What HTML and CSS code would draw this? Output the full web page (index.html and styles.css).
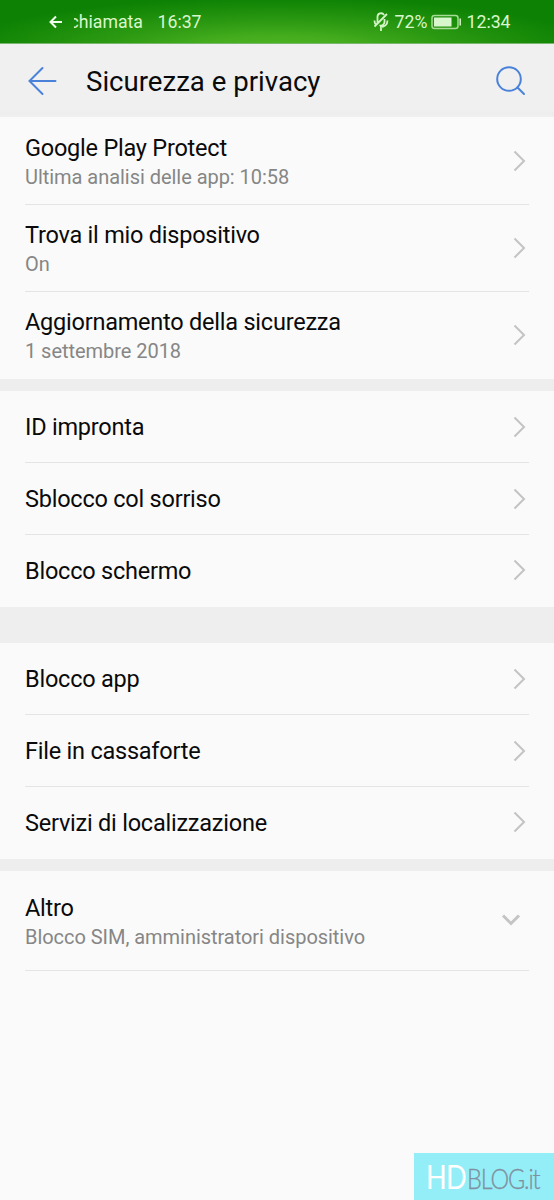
FILE: index.html
```html
<!DOCTYPE html>
<html lang="it">
<head>
<meta charset="utf-8">
<title>Sicurezza e privacy</title>
<link rel="stylesheet" href="styles.css">
</head>
<body>
<div class="status">
  <svg class="status-back" width="14" height="14" viewBox="0 0 14 14"><path d="M13 7H1.500M7 1.500L1.500 7L7 12.500"/></svg>
  <div class="ticker"><span>chiamata</span></div>
  <span class="call-time">16:37</span>
  <svg class="mic" width="16" height="20" viewBox="0 0 16 20"><path d="M4.500 11V5a3.500 3.500 0 0 1 6.500-2M11.500 7v3a3.500 3.500 0 0 1-5 3.200M1.500 8.500c0 2 .5 3.200 1.300 4.200M14.500 8.500c0 4-3 6.500-7.500 6.500M8 15v4M14 2L1.500 14.500"/></svg>
  <span class="percent">72%</span>
  <svg class="battery" width="31" height="16" viewBox="0 0 31 16"><rect class="case" x="1" y="1.500" width="26" height="13" rx="2.500"/><rect class="fill" x="3" y="3.500" width="17.500" height="9"/><path class="tip" d="M29.200 4.500v7"/></svg>
  <span class="clock">12:34</span>
</div>
<header class="header">
  <svg class="back" width="30" height="30" viewBox="0 0 30 30"><path d="M27.500 15H1.500M14.500 2L1.500 15L14.500 28"/></svg>
  <h1>Sicurezza e privacy</h1>
  <svg class="search" width="32" height="32" viewBox="0 0 32 32"><circle cx="14" cy="14" r="11.800"/><path d="M22.500 22.500L29 29"/></svg>
</header>
<main>
  <section class="group detailed">
    <div class="row"><div><h2>Google Play Protect</h2><p>Ultima analisi delle app: 10:58</p></div><svg class="chevron" width="13" height="22" viewBox="0 0 13 22"><path d="M1.500 1.500L11 11L1.500 20.500"/></svg></div>
    <div class="row"><div><h2>Trova il mio dispositivo</h2><p>On</p></div><svg class="chevron" width="13" height="22" viewBox="0 0 13 22"><path d="M1.500 1.500L11 11L1.500 20.500"/></svg></div>
    <div class="row"><div><h2>Aggiornamento della sicurezza</h2><p>1 settembre 2018</p></div><svg class="chevron" width="13" height="22" viewBox="0 0 13 22"><path d="M1.500 1.500L11 11L1.500 20.500"/></svg></div>
  </section>
  <section class="group simple">
    <div class="row"><h2>ID impronta</h2><svg class="chevron" width="13" height="22" viewBox="0 0 13 22"><path d="M1.500 1.500L11 11L1.500 20.500"/></svg></div>
    <div class="row"><h2>Sblocco col sorriso</h2><svg class="chevron" width="13" height="22" viewBox="0 0 13 22"><path d="M1.500 1.500L11 11L1.500 20.500"/></svg></div>
    <div class="row"><h2>Blocco schermo</h2><svg class="chevron" width="13" height="22" viewBox="0 0 13 22"><path d="M1.500 1.500L11 11L1.500 20.500"/></svg></div>
  </section>
  <section class="group simple spaced">
    <div class="row"><h2>Blocco app</h2><svg class="chevron" width="13" height="22" viewBox="0 0 13 22"><path d="M1.500 1.500L11 11L1.500 20.500"/></svg></div>
    <div class="row"><h2>File in cassaforte</h2><svg class="chevron" width="13" height="22" viewBox="0 0 13 22"><path d="M1.500 1.500L11 11L1.500 20.500"/></svg></div>
    <div class="row"><h2>Servizi di localizzazione</h2><svg class="chevron" width="13" height="22" viewBox="0 0 13 22"><path d="M1.500 1.500L11 11L1.500 20.500"/></svg></div>
  </section>
  <section class="group more">
    <div class="row"><div><h2>Altro</h2><p>Blocco SIM, amministratori dispositivo</p></div><svg class="expand" width="20" height="14" viewBox="0 0 20 14"><path d="M2 2.500L10 10.500L18 2.500"/></svg></div>
  </section>
</main>
<div class="watermark"><span class="hd">HD</span><span class="blog">BLOG.it</span></div>
</body>
</html>
```
FILE: styles.css
```css
* { box-sizing: border-box; }
body {
  margin: 0;
  height: 1200px;
  position: relative;
  overflow: hidden;
  background: #fafafa;
  font-family: Roboto, sans-serif;
  color: #0a0a0a;
}
svg { display: block; fill: none; flex: none; }
h1, h2, p { margin: 0; font-weight: 400; white-space: nowrap; }
.status {
  height: 44px;
  display: flex;
  align-items: center;
  padding-left: 49px;
  border-bottom: 1px solid #79b76f;
  background: radial-gradient(ellipse 320px 52px at 50% 115%, #50b624 0%, #45ad1e 25%, #2c9912 55%, #168908 85%, #0d8104 100%);
  color: #d9f7cd;
  font-size: 17.700px;
  line-height: 44px;
}
.status svg { stroke: #d3f5c5; stroke-width: 1.5; }
.status .status-back { stroke: #f0ffea; stroke-width: 2; }
.ticker { margin-left: 10.500px; width: 70px; overflow: hidden; }
.ticker span { display: block; margin-left: -4px; }
.call-time { margin-left: 14px; width: 44px; }
.status .mic { margin-left: 171px; stroke-width: 1.800; }
.percent { margin-left: 6px; width: 33px; }
.status .battery { margin-left: 3px; stroke: #a6dc93; }
.status .battery .tip { stroke: #d3f5c5; }
.status .battery .fill { fill: #d8f6cb; stroke: none; }
.clock { margin-left: 5px; }
.header {
  height: 73px;
  display: flex;
  align-items: center;
  padding: 0 27px 0 28px;
  background: linear-gradient(#f0f0f0 66px, #ededed 69px, #f0f0f0 73px);
}
.header svg { stroke: #4a82da; stroke-width: 2; stroke-linecap: round; }
.header h1 { margin-left: 28px; font-size: 27.600px; line-height: 32px; padding-top: 3px; }
.search { margin-left: auto; }
.group { padding: 0 25px; border-bottom: 12px solid #eeeeee; }
.row { display: flex; align-items: center; justify-content: space-between; padding-right: 3px; }
.row + .row { border-top: 1px solid #e4e4e4; }
.row h2 { font-size: 23.500px; line-height: 29px; letter-spacing: -0.230px; }
.row p { font-size: 20px; line-height: 29px; letter-spacing: -0.040px; color: #868686; }
.detailed .row > div, .more .row > div { padding-top: 4px; }
.detailed .row { height: 87px; }
.detailed .row:last-child { height: 88px; }
.detailed .row:last-child > div { padding-top: 3px; }
.detailed .row:last-child .chevron { margin-bottom: 2px; }
.simple .row { height: 72px; }
.simple .row:first-child { height: 71px; }
.simple .row:last-child { height: 73px; }
.simple .row h2 { padding-top: 2px; }
.simple .row:last-child h2 { padding-top: 0; }
.simple .row:last-child .chevron { margin-bottom: 2px; }
.simple { border-bottom-width: 36px; }
.spaced { border-bottom-width: 12px; }
.chevron { stroke: #c3c3c3; stroke-width: 2; }
.more { border: 0; }
.more .row { height: 100px; border-bottom: 1px solid #e4e4e4; padding-right: 8px; }
.expand { stroke: #c4c4c4; stroke-width: 3; margin-bottom: 2px; }
.watermark {
  position: absolute;
  right: 0;
  bottom: 0;
  width: 140px;
  height: 47px;
  padding-left: 12px;
  display: flex;
  align-items: baseline;
  background: #94eef7;
  font-family: Lato, sans-serif;
  line-height: 47px;
}
.hd, .blog { transform-origin: left; }
.hd { width: 41px; color: #fff; font-size: 32px; letter-spacing: -1px; transform: scaleX(0.850); }
.blog { color: #7f909e; font-size: 27px; font-weight: 300; letter-spacing: -1.300px; transform: scaleX(0.870); -webkit-text-stroke: 0.3px #7f909e; }
```
